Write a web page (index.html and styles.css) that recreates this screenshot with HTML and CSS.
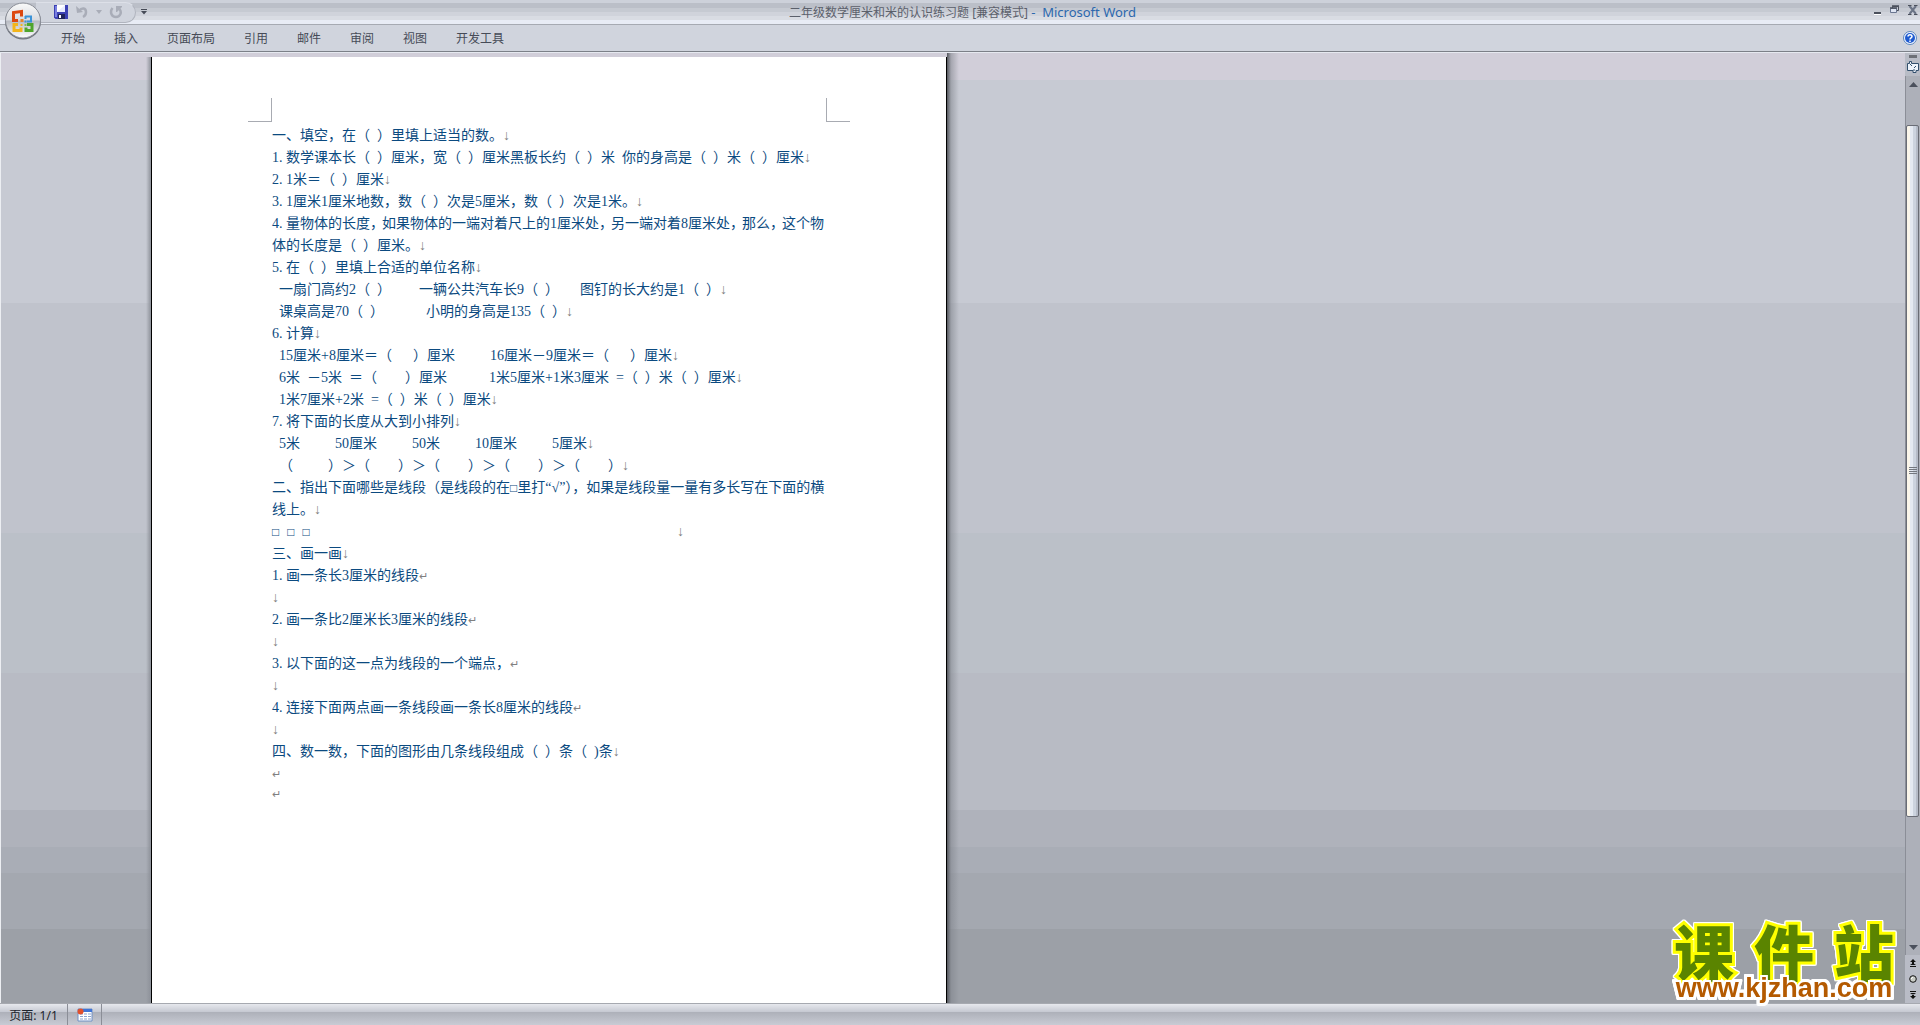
FILE: index.html
```html
<!DOCTYPE html>
<html lang="zh-CN">
<head>
<meta charset="utf-8">
<title>二年级数学厘米和米的认识练习题 [兼容模式] - Microsoft Word</title>
<link rel="stylesheet" href="styles.css">
</head>
<body>
<header class="top">
  <div class="titlebar">
    <div class="quick">
      <button class="tool" aria-label="保存"><svg width="14" height="14" viewBox="0 0 14 14"><path d="M0 0h14v14H1.500L0 12.500z" fill="#3c41b4"/><path d="M1 1h2v11H1z" fill="#7a80e0"/><path d="M3 0h8v7H3z" fill="#e8ecff"/><path d="M3 0h8L3 7z" fill="#fff"/><path d="M4 9h7v5H4z" fill="#20245c"/><path d="M5 10h2v3H5z" fill="#fff"/></svg></button>
      <button class="tool" aria-label="撤销"><svg width="14" height="14" viewBox="0 0 14 14"><path d="M1 1l1 7 6-1z" fill="#a9adb8"/><path d="M4 6c3-4 7-3 7 1 0 3-1 4-3 5" fill="none" stroke="#a9adb8" stroke-width="2.500"/></svg></button>
      <button class="tool" aria-label="撤销选项"><svg width="6" height="4" viewBox="0 0 6 4"><path d="M0 0h6L3 4z" fill="#a9adb8"/></svg></button>
      <button class="tool" aria-label="恢复"><svg width="14" height="14" viewBox="0 0 14 14"><path d="M3.500 3c-3 4-1 9 3.500 9s6-5 3.500-8" fill="none" stroke="#a9adb8" stroke-width="2.500"/><path d="M7 1h6v1L8 7H7z" fill="#a9adb8"/></svg></button>
    </div>
    <button class="tool more" aria-label="自定义快速访问工具栏"><svg width="6" height="6" viewBox="0 0 6 6"><path d="M0 0h6v1H0zM0 2h6L3 5.500z" fill="#464b57"/></svg></button>
    <h1 class="title">二年级数学厘米和米的认识练习题 [兼容模式] <span class="app">-&nbsp; Microsoft Word</span></h1>
    <div class="window">
      <button class="tool" aria-label="最小化"><svg width="8" height="10" viewBox="0 0 8 10"><path d="M0 7h7v2H0z" fill="#4b505c"/><path d="M0 9h7v1H0z" fill="#fff"/></svg></button>
      <button class="tool" aria-label="还原"><svg width="10" height="10" viewBox="0 0 10 10"><path d="M2.500 3V1.500h6v4H7" fill="none" stroke="#4b505c"/><path d="M.5 3.500h6v4h-6z" fill="#dfe5f2" stroke="#6a7690"/><path d="M2 1h7M0 3h7" stroke="#4b505c" stroke-width="1.500"/></svg></button>
      <button class="tool" aria-label="关闭"><svg width="10" height="10" viewBox="0 0 10 10"><path d="M1.500 1l6.500 8M8 1L1.500 9" stroke="#6b7486" stroke-width="2"/><path d="M0 .5h3.500M6 .5h3.500M0 9.500h3.500M6 9.500h3.500" stroke="#4b505c"/></svg></button>
    </div>
  </div>
  <nav class="tabs">
    <button>开始</button><button>插入</button><button>页面布局</button><button>引用</button><button>邮件</button><button>审阅</button><button>视图</button><button>开发工具</button>
    <button class="help" aria-label="帮助"><svg width="14" height="14" viewBox="0 0 14 14"><circle cx="7" cy="7" r="6.500" fill="#f3f7ff" stroke="#5d86bd"/><circle cx="7" cy="7" r="5" fill="#1f5bd0"/><path d="M5 5.500c0-2.400 4-2.400 4 0C9 7 7 6.800 7 8.500M7 9.500v1.500" fill="none" stroke="#fff" stroke-width="1.500"/></svg></button>
  </nav>
  <button class="orb" aria-label="Office 按钮"><svg width="38" height="38" viewBox="0 0 38 38">
    <defs><linearGradient id="orb" x1="0" y1="0" x2="0" y2="1"><stop offset="0" stop-color="#fafafa"/><stop offset=".48" stop-color="#d9dbe0"/><stop offset=".52" stop-color="#b9bcc4"/><stop offset="1" stop-color="#fdfdfd"/></linearGradient></defs>
    <circle cx="19" cy="19.500" r="18" fill="#6f737b"/><circle cx="19" cy="18.500" r="17.500" fill="url(#orb)" stroke="#8a8e98"/>
    <g fill="none"><path d="M14 18.500H9.500v-8l8-1v5" stroke="#dc470f" stroke-width="3"/><path d="M21 14.500h6v5h-4M21.500 14v3" stroke="#3b93d8" stroke-width="2"/><path d="M14 22.500h-4v6h7v-3" stroke="#f3b51b" stroke-width="3"/><path d="M23 22.500h5v6h-6v-3" stroke="#4fa52c" stroke-width="3"/></g>
    <path d="M16.500 17h3v3h-3z" fill="#e8852a"/><path d="M16.500 22h2v2h-2z" fill="#f3b51b"/><path d="M20.500 22h2v2h-2z" fill="#7cc04c"/><path d="M20.500 18.500h2v2h-2z" fill="#3b93d8"/>
  </svg></button>
</header>

<main class="work">
  <article class="paper">
    <div class="corners"><i class="corner"></i><i class="corner right"></i></div>
    <div class="text">
      <p>一、填空，在（&ensp;）里填上适当的数。<s>↓</s></p>
      <p><b>1.</b>数学课本长（&ensp;）厘米，宽（&ensp;）厘米黑板长约（&ensp;）米&ensp;你的身高是（&ensp;）米（&ensp;）厘米<s>↓</s></p>
      <p><b>2.</b>1米＝（&ensp;）厘米<s>↓</s></p>
      <p><b>3.</b>1厘米1厘米地数，数（&ensp;）次是5厘米，数（&ensp;）次是1米。<s>↓</s></p>
      <p><b>4.</b>量物体的长度<u>，</u>如果物体的一端对着尺上的1厘米处<u>，</u>另一端对着8厘米处<u>，</u>那么<u>，</u>这个物<br>体的长度是（&ensp;）厘米。<s>↓</s></p>
      <p><b>5.</b>在（&ensp;）里填上合适的单位名称<s>↓</s></p>
      <p>&ensp;一扇门高约2（&ensp;）&ensp;&ensp;&ensp;&ensp;一辆公共汽车长9（&ensp;）&ensp;&ensp;&ensp;图钉的长大约是1（&ensp;）<s>↓</s></p>
      <p>&ensp;课桌高是70（&ensp;）&ensp;&ensp;&ensp;&ensp;&ensp;&ensp;小明的身高是135（&ensp;）<s>↓</s></p>
      <p><b>6.</b>计算<s>↓</s></p>
      <p>&ensp;15厘米+8厘米＝（&ensp;&ensp;&ensp;）厘米&ensp;&ensp;&ensp;&ensp;&ensp;16厘米－9厘米＝（&ensp;&ensp;&ensp;）厘米<s>↓</s></p>
      <p>&ensp;6米&ensp;－5米&ensp;＝（&ensp;&ensp;&ensp;&ensp;）厘米&ensp;&ensp;&ensp;&ensp;&ensp;&ensp;1米5厘米+1米3厘米&ensp;=（&ensp;）米（&ensp;）厘米<s>↓</s></p>
      <p>&ensp;1米7厘米+2米&ensp;=（&ensp;）米（&ensp;）厘米<s>↓</s></p>
      <p><b>7.</b>将下面的长度从大到小排列<s>↓</s></p>
      <p>&ensp;5米&ensp;&ensp;&ensp;&ensp;&ensp;50厘米&ensp;&ensp;&ensp;&ensp;&ensp;50米&ensp;&ensp;&ensp;&ensp;&ensp;10厘米&ensp;&ensp;&ensp;&ensp;&ensp;5厘米<s>↓</s></p>
      <p>&ensp;（&ensp;&ensp;&ensp;&ensp;&ensp;）＞（&ensp;&ensp;&ensp;&ensp;）＞（&ensp;&ensp;&ensp;&ensp;）＞（&ensp;&ensp;&ensp;&ensp;）＞（&ensp;&ensp;&ensp;&ensp;）<s>↓</s></p>
      <p>二、指出下面哪些是线段（是线段的在<span class="box">□</span>里打“√”），如果是线段量一量有多长写在下面的横<br>线上。<s>↓</s></p>
      <p class="boxes"><span class="box">□</span><span class="box">□</span><span class="box">□</span><s>↓</s></p>
      <p>三、画一画<s>↓</s></p>
      <p><b>1.</b>画一条长3厘米的线段<s class="end">↵</s></p>
      <p><s>↓</s></p>
      <p><b>2.</b>画一条比2厘米长3厘米的线段<s class="end">↵</s></p>
      <p><s>↓</s></p>
      <p><b>3.</b>以下面的这一点为线段的一个端点，<s class="end">↵</s></p>
      <p><s>↓</s></p>
      <p><b>4.</b>连接下面两点画一条线段画一条长8厘米的线段<s class="end">↵</s></p>
      <p><s>↓</s></p>
      <p>四、数一数，下面的图形由几条线段组成（&ensp;）条（&ensp;)条<s>↓</s></p>
      <p><s class="end">↵</s></p>
      <p class="last"><s class="end">↵</s></p>
    </div>
  </article>

  <div class="desk">
    <div class="mark">
      <div class="mark-name"><span>课</span><span>件</span><span>站</span></div>
      <a class="mark-link" href="#">www.kjzhan.com</a>
    </div>
  </div>

  <aside class="scroll">
    <i class="split"></i>
    <button class="ruler" aria-label="标尺"><svg width="12" height="12" viewBox="0 0 12 12"><path d="M.5 2.500h2v-2h2v2h7v7H9v2H6v-2H.5z" fill="#eef3fb" stroke="#34506e"/><path d="M3 3l2 2M7 7l2-2M6 9h2" stroke="#34506e"/></svg></button>
    <div class="track">
      <button class="arrow" aria-label="向上滚动"><svg width="9" height="5" viewBox="0 0 9 5"><path d="M0 5h9L4.500 0z" fill="#4b505c"/></svg></button>
      <div class="rail"><div class="thumb"><i></i><i></i><i></i><i></i></div></div>
      <button class="arrow" aria-label="向下滚动"><svg width="9" height="5" viewBox="0 0 9 5"><path d="M0 0h9L4.500 5z" fill="#4b505c"/></svg></button>
    </div>
    <button class="jump" aria-label="上一页"><svg width="6" height="8" viewBox="0 0 6 8"><path d="M0 3l3-3 3 3zM0 7h6v1H0zM2 3h2v2H2zM0 6l3-2 3 2z" fill="#111"/></svg></button>
    <button class="jump" aria-label="选择浏览对象"><svg width="8" height="8" viewBox="0 0 8 8"><circle cx="4" cy="4" r="3.300" fill="#c9ccc6" stroke="#111"/><path d="M2 4l2-2" stroke="#fff"/></svg></button>
    <button class="jump" aria-label="下一页"><svg width="6" height="8" viewBox="0 0 6 8"><path d="M0 5l3 3 3-3zM0 0h6v1H0zM2 3h2v2H2zM0 2l3 2 3-2z" fill="#111"/></svg></button>
  </aside>
</main>

<footer class="status">
  <button class="pages">页面: 1/1</button>
  <button class="macro" aria-label="录制宏"><svg width="16" height="14" viewBox="0 0 16 14"><path d="M1 1h14v12H1z" fill="#fff" stroke="#6f8fc4"/><path d="M1 1h14v3H1z" fill="#3f74d6"/><path d="M3 6h3M7 6h3M11 6h3M3 8.500h3M7 8.500h3M11 8.500h3M3 11h3M7 11h3M11 11h3" stroke="#8ba3cf"/><circle cx="3.500" cy="3.500" r="3" fill="#e2502c"/></svg></button>
</footer>
</body>
</html>
```
FILE: styles.css
```css
* { box-sizing: border-box; }

body {
  margin: 0;
  min-height: 100vh;
  display: flex;
  flex-direction: column;
  background: #d0d4dd;
  font-family: "Noto Sans", "Noto Sans CJK SC", sans-serif;
  font-size: 12px;
}

button {
  margin: 0;
  padding: 0;
  border: 0;
  background: none;
  font: inherit;
  color: inherit;
  display: flex;
  align-items: center;
  justify-content: center;
}

svg { display: block; }

/* Title bar and ribbon */
.top { position: relative; }

.titlebar {
  display: flex;
  align-items: center;
  height: 25px;
  padding: 0 2px 0 36px;
  border-bottom: 1px solid #a6aab2;
  background: linear-gradient(#cdd1da 0 3px, #bbbfc8 3px 8px, #c6cad2 8px 12px, #d0d3db 12px 16px, #d9dce3 16px 20px, #e8ecf5 20px);
}

.quick {
  display: flex;
  align-items: center;
  gap: 7px;
  width: 100px;
  height: 21px;
  padding-left: 18px;
  border: 1px solid #b0b4be;
  border-left: 0;
  border-top-color: #dde0e8;
  border-radius: 0 11px 11px 0;
  background: #d0d4dd;
}

.more { margin-left: 5px; }

.title {
  flex: 1;
  margin: 0;
  padding-right: 96px;
  text-align: center;
  font-size: 12px;
  font-weight: 400;
  line-height: 24px;
  color: #5b606b;
  white-space: nowrap;
}

.app {
  color: #2c68ae;
  font-size: 13px;
}

.window {
  display: flex;
  gap: 8px;
  height: 16px;
}

.window .tool { height: 12px; }

.tabs {
  display: flex;
  align-items: center;
  height: 28px;
  padding: 0 3px 2px 47px;
  border-bottom: 1px solid #e6e9f0;
  box-shadow: inset 0 -1px #7c8088;
  color: #464b57;
}

.tabs button { padding: 0 15px 0 14px; }

.tabs .help {
  margin-left: auto;
  padding: 0;
}

.orb {
  position: absolute;
  left: 4px;
  top: 2px;
}

/* Work area */
.work {
  flex: 1;
  display: flex;
  padding-left: 145px;
  border-left: 1px solid #eceef2;
  background: linear-gradient(#d1ced9 0 27px, #c7cad3 27px 250px, #c0c3cc 250px 480px, #bbc0c8 480px 620px, #b8bbc4 620px 757px, #afb2bb 757px 794px, #a9adb6 794px 820px, #a4a8b0 820px 876px, #9ca0a7 876px);
}

.paper {
  flex: none;
  width: 801px;
  margin-top: 4px;
  padding: 41px 0 0 102px;
  background: linear-gradient(90deg, #8d919900, #8d9199 5px, #000 5px 6px, #fff 6px 800px, #000 800px);
}

.corners {
  display: flex;
  justify-content: space-between;
  width: 602px;
  height: 24px;
}

.corner {
  width: 24px;
  border: solid #a8abb2;
  border-width: 0 1px 1px 0;
}

.corner.right { border-width: 0 0 1px 1px; }

.text {
  margin: 3px 0 0 24px;
  font-family: "Liberation Serif", "Noto Sans CJK SC", serif;
  font-size: 14px;
  line-height: 22px;
  color: #0b4a80;
  white-space: nowrap;
}

.text p { margin: 0; }

.text b,
.text u,
.text s {
  display: inline-block;
  height: 22px;
  vertical-align: top;
  font-weight: 400;
  text-decoration: none;
}

.text b { width: 14px; }
.text u { width: 12px; }
.text s { color: #808080; }
.text .end { font-size: 11px; }

.box { font-size: 12px; }

.text .boxes {
  display: flex;
  gap: 8px;
  width: 412px;
}

.boxes s { margin-left: auto; }
.text .last { line-height: 18px; }

.desk {
  flex: 1;
  display: flex;
  align-items: flex-end;
  justify-content: flex-end;
  padding: 0 6px 1px 0;
  background: linear-gradient(90deg, #55585e, #7e828a88 4px, #a0a4ac00 12px);
}

/* Site mark */
.mark {
  width: 230px;
  display: flex;
  flex-direction: column;
  align-items: center;
  filter: drop-shadow(1px 0 #fff) drop-shadow(-1px 0 #fff) drop-shadow(0 1px #fff) drop-shadow(0 -1px #fff);
}

.mark-name {
  width: 100%;
  display: flex;
  justify-content: space-between;
  padding: 0 5px;
  font: 900 60px/50px "Noto Sans CJK SC", sans-serif;
  color: #5a8400;
  -webkit-text-stroke: 6px #ff0;
  paint-order: stroke fill;
}

.mark-link {
  font: 700 27px/27px "Liberation Sans", Arial, sans-serif;
  color: #b45a00;
  text-decoration: none;
  -webkit-text-stroke: 4px #fff;
  paint-order: stroke fill;
}

/* Scroll bar */
.scroll {
  display: flex;
  flex-direction: column;
  width: 15px;
  padding-top: 2px;
  background: #b9bcc6;
}

.split {
  align-self: center;
  width: 8px;
  height: 3px;
  background: #6d7077;
}

.ruler { height: 18px; }

.track {
  flex: 1;
  display: flex;
  flex-direction: column;
  background: #adb0b9;
  border-left: 1px solid #8b8e97;
}

.arrow { height: 16px; }

.rail {
  flex: 1;
  padding: 33px 1px 0 0;
}

.thumb {
  height: 85%;
  display: flex;
  flex-direction: column;
  align-items: center;
  justify-content: center;
  gap: 1px;
  border: 1px solid #696c76;
  border-radius: 2px;
  background: linear-gradient(90deg, #fbf6ea 3px, #e4e9f2 3px 6px, #ccd3df 6px 9px, #b5bbc8 9px);
}

.thumb i {
  width: 8px;
  height: 1px;
  background: #73777f;
}

.jump { height: 16px; }

/* Status bar */
.status {
  display: flex;
  height: 22px;
  border-top: 1px solid #a6a9b0;
  background: linear-gradient(#e6e8ed, #c5c8d1 8px, #adb0b9 8px, #c8cbd4);
  color: #20242c;
}

.status button { border-right: 1px solid #8b8e97; }
.pages { width: 68px; }
.macro { width: 34px; }
```
